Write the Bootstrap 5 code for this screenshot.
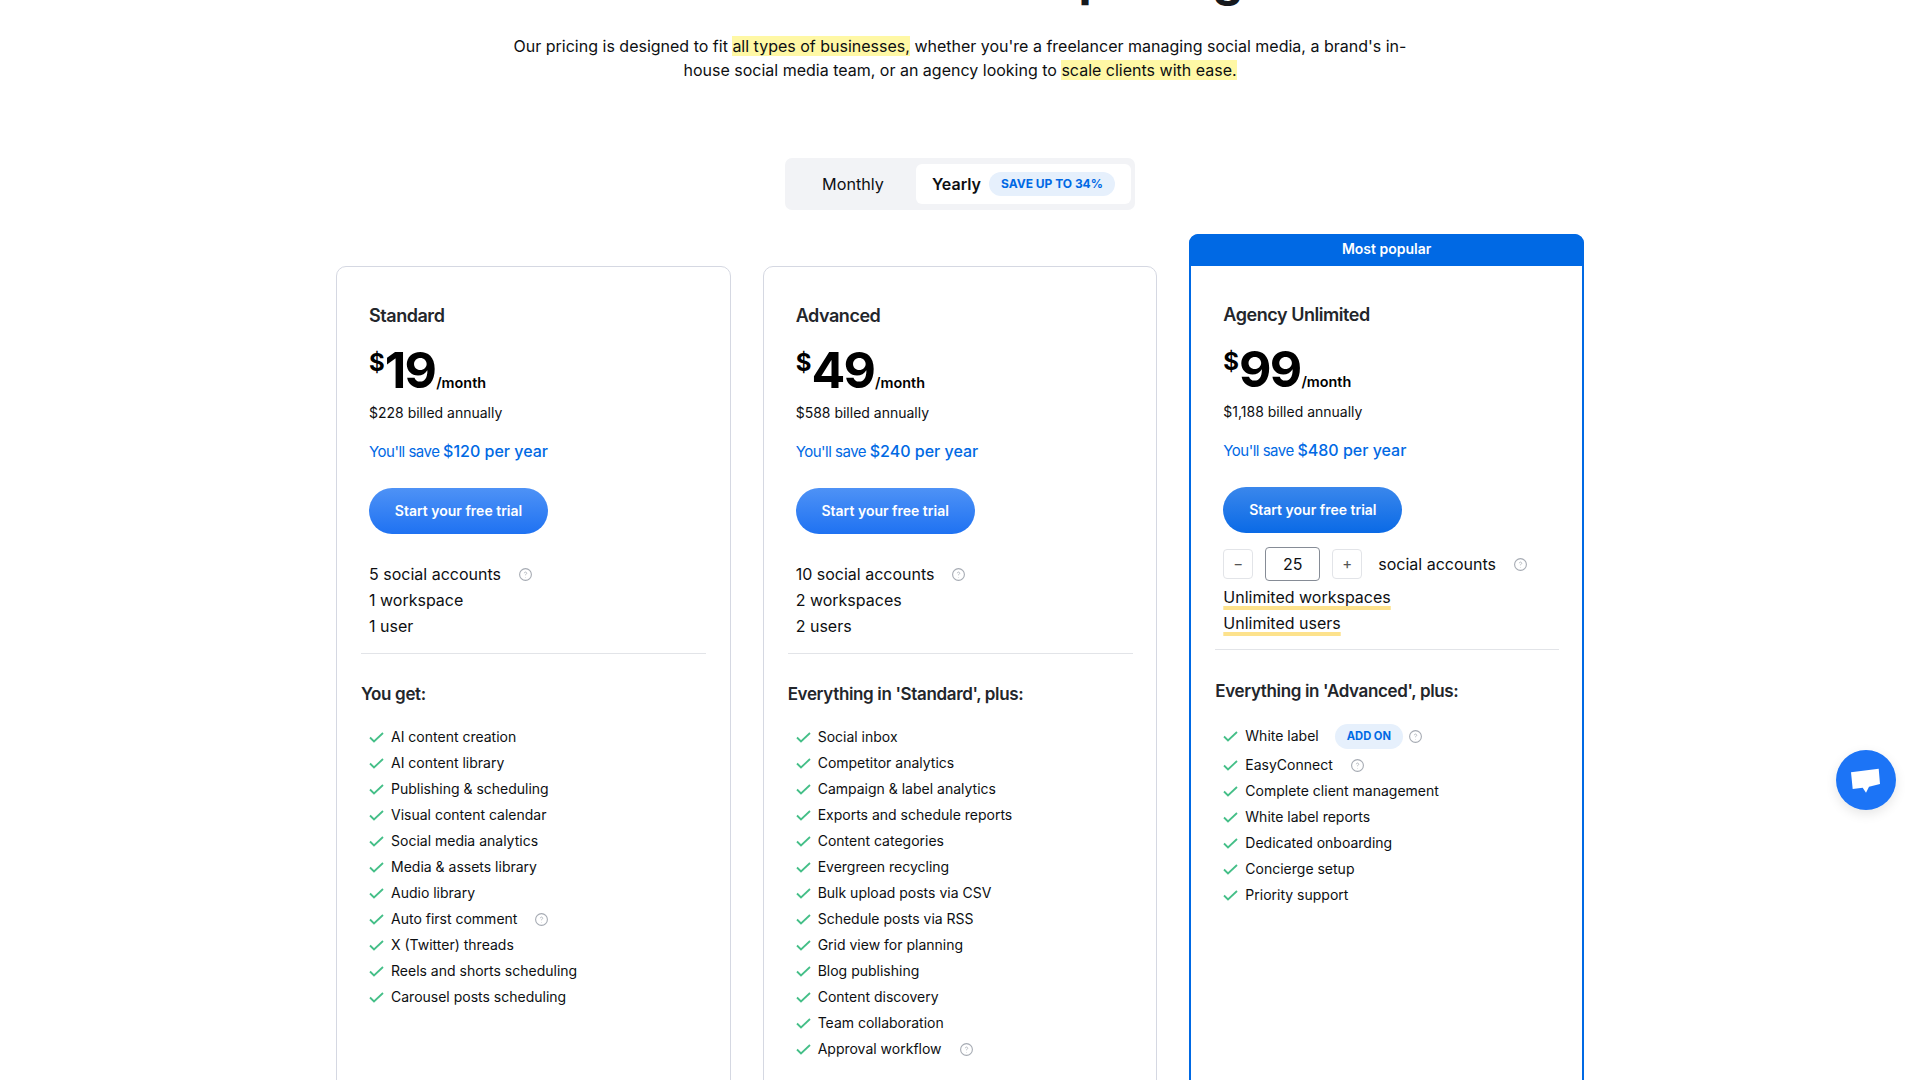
<!DOCTYPE html>
<html lang="en"><head><meta charset="utf-8">
<link href="https://cdn.jsdelivr.net/npm/bootstrap@5.3.0/dist/css/bootstrap.min.css" rel="stylesheet">
<style>
html,body{height:1080px;overflow:hidden}
body{font-family:Inter,"Liberation Sans",sans-serif;color:#0d0f12;background:#fff}
.page-head{font-size:48px;line-height:60px;font-weight:700;margin:-51px 0 0;height:60px;color:#16191d}
.intro{width:900px;font-size:16px;line-height:24px;margin:25px auto 0;color:#0d0f12}
.hl{background:#fff8a5}
.toggle-box{width:350px;height:52px;background:#f2f3f6;border-radius:7px;margin:76px auto 0;padding:6px 4px 6px 0}
.tab-m{width:131px;padding-left:5px;font-size:16.2px}
.tab-y{width:215px;background:#fff;border-radius:6px;font-size:16px;font-weight:600;padding-left:16px}
.save-pill{background:#e6f0fc;color:#0069e4;font-size:12px;font-weight:700;border-radius:12px;padding:0 12px;height:24px;margin-left:8px;line-height:24px;white-space:nowrap}
.plans{width:1248px;margin:24px auto 0;gap:32px;align-items:flex-start}
.plan{flex:0 0 calc((100% - 64px) / 3);min-width:0;margin-top:32px;height:830px;border:1px solid #d5d8e2;border-radius:10px;padding:37px 25px 0}
.plan-pop{margin-top:0;border:2px solid #0069e4;padding:0;height:862px}
.pop-bar{background:#0069e4;color:#fff;font-size:14px;font-weight:600;text-align:center;line-height:27px;margin:-2px -2px 0;padding-top:1px;height:32px;border-radius:9px 9px 0 0}
.pop-body{padding:37px 25px 0}
.plan-in{padding-left:7px}
.plan-name{font-size:18px;line-height:24px;font-weight:600;color:#23262b;margin:0;letter-spacing:-.45px}
.price{font-weight:700;margin-top:14px;height:56px;line-height:56px;color:#000;white-space:nowrap}
.price sup{font-size:24px;top:-17px;line-height:0;vertical-align:baseline;position:relative;font-weight:700}
.price b{font-size:50px;letter-spacing:-1.8px;font-weight:700}
.price span{font-size:14.4px;font-weight:600;margin-left:1px}
.billed{font-size:14px;line-height:22px;margin-top:4px}
.saving{font-size:15px;line-height:24px;color:#0069e4;margin-top:15px;letter-spacing:-.5px}
.saving em{font-style:normal;font-weight:500;font-size:16px;letter-spacing:0}
.cta{display:block;width:179px;height:46px;margin-top:24px;border-radius:23px;border:0;background:linear-gradient(#4e92f6,#1f72f2);color:#fff;font-size:14px;font-weight:600;padding:0 0 1px}
.plan-pop .cta{background:linear-gradient(#3a87ec,#0a6ae6)}
.limits{font-size:16px;line-height:26px;margin-top:27px}
.rule{border:0;border-top:1px solid #e2e4e8;opacity:1;margin:14px 0 0 -8px;width:345px}
.plan-pop .rule{margin-top:13px;width:344px}
.get-title{font-size:17px;line-height:24px;font-weight:600;color:#23262b;margin:28px 0 0 -8px;letter-spacing:-.35px}
.plan-pop .get-title{margin-top:29px}
.feats{list-style:none;padding:0;margin:18px 0 0}
.feats li{display:flex;align-items:center;font-size:14px;line-height:26px;height:26px;color:#0d0f12}
.feats li.tall{height:30px;margin-bottom:1px}
.check{width:15px;height:11px;margin-right:7px;flex:none}
.hint{width:13px;height:13px;flex:none;margin-left:18px}
.addon{background:#e6f0fc;color:#0069e4;font-size:11.2px;font-weight:700;border-radius:13px;padding:0 12px;height:25px;line-height:25px;margin-left:16px}
.addon+.hint{margin-left:6px}
.stepper{margin-top:14px;height:34px;font-size:16px}
.step{width:30px;height:30px;border:1px solid #e2e4e8;border-radius:4px;color:#555;font-size:15px;line-height:27px;text-align:center;flex:none}
.qty{width:55px;height:34px;border:1px solid #868c96;border-radius:4px;line-height:32px;text-align:center;margin:0 12px;flex:none}
.ul-y{text-decoration:underline;text-decoration-color:#fde28c;text-decoration-thickness:4px;text-underline-offset:3px;text-decoration-skip-ink:auto}
.unl{font-size:16px;line-height:26px;margin-top:3px}
.chat{position:fixed;left:1836px;top:750px;width:60px;height:60px;border-radius:50%;background:#1c74f6;box-shadow:0 4px 12px rgba(0,0,0,.1)}
.chat svg{display:block;margin:15px 0 0 15px}
</style></head>
<body>
<h1 class="page-head text-center">Scale with smart pricing</h1>
<p class="intro text-center">Our pricing is designed to fit <span class="hl">all types of businesses,</span> whether you're a freelancer managing social media, a brand's in-house social media team, or an agency looking to <span class="hl">scale clients with ease.</span></p>
<div class="toggle-box d-flex align-items-center">
<div class="tab-m text-center">Monthly</div>
<div class="tab-y d-flex align-items-center h-100">Yearly<span class="save-pill">SAVE UP TO 34%</span></div>
</div>
<svg width="0" height="0" class="d-block"><defs>
<symbol id="ck" viewBox="0 0 15 11"><path d="M1 5.5 5 9.5 14 1" fill="none" stroke="#45bf88" stroke-width="1.8"/></symbol>
<symbol id="qm" viewBox="0 0 13 13"><circle cx="6.5" cy="6.5" r="5.9" fill="none" stroke="#a6abb3" stroke-width="1.1"/><path d="M5.3 5.2a1.2 1.2 0 1 1 1.8 1.1c-.4.2-.6.4-.6.9M6.5 9v.4" fill="none" stroke="#a6abb3" stroke-width=".8"/></symbol>
</defs></svg>
<div class="plans d-flex">
<section class="plan"><div class="plan-in">
<h3 class="plan-name">Standard</h3>
<div class="price"><sup>$</sup><b>19</b><span>/month</span></div>
<div class="billed">$228 billed annually</div>
<div class="saving">You'll save <em>$120 per year</em></div>
<button class="cta">Start your free trial</button>
<div class="limits"><div class="d-flex align-items-center">5 social accounts<svg class="hint"><use href="#qm"/></svg></div><div>1 workspace</div><div>1 user</div></div>
<hr class="rule">
<h4 class="get-title">You get:</h4>
<ul class="feats">
<li><svg class="check"><use href="#ck"/></svg>AI content creation</li>
<li><svg class="check"><use href="#ck"/></svg>AI content library</li>
<li><svg class="check"><use href="#ck"/></svg>Publishing &amp; scheduling</li>
<li><svg class="check"><use href="#ck"/></svg>Visual content calendar</li>
<li><svg class="check"><use href="#ck"/></svg>Social media analytics</li>
<li><svg class="check"><use href="#ck"/></svg>Media &amp; assets library</li>
<li><svg class="check"><use href="#ck"/></svg>Audio library</li>
<li><svg class="check"><use href="#ck"/></svg>Auto first comment<svg class="hint"><use href="#qm"/></svg></li>
<li><svg class="check"><use href="#ck"/></svg>X (Twitter) threads</li>
<li><svg class="check"><use href="#ck"/></svg>Reels and shorts scheduling</li>
<li><svg class="check"><use href="#ck"/></svg>Carousel posts scheduling</li>
</ul></div></section>
<section class="plan"><div class="plan-in">
<h3 class="plan-name">Advanced</h3>
<div class="price"><sup>$</sup><b>49</b><span>/month</span></div>
<div class="billed">$588 billed annually</div>
<div class="saving">You'll save <em>$240 per year</em></div>
<button class="cta">Start your free trial</button>
<div class="limits"><div class="d-flex align-items-center">10 social accounts<svg class="hint"><use href="#qm"/></svg></div><div>2 workspaces</div><div>2 users</div></div>
<hr class="rule">
<h4 class="get-title">Everything in 'Standard', plus:</h4>
<ul class="feats">
<li><svg class="check"><use href="#ck"/></svg>Social inbox</li>
<li><svg class="check"><use href="#ck"/></svg>Competitor analytics</li>
<li><svg class="check"><use href="#ck"/></svg>Campaign &amp; label analytics</li>
<li><svg class="check"><use href="#ck"/></svg>Exports and schedule reports</li>
<li><svg class="check"><use href="#ck"/></svg>Content categories</li>
<li><svg class="check"><use href="#ck"/></svg>Evergreen recycling</li>
<li><svg class="check"><use href="#ck"/></svg>Bulk upload posts via CSV</li>
<li><svg class="check"><use href="#ck"/></svg>Schedule posts via RSS</li>
<li><svg class="check"><use href="#ck"/></svg>Grid view for planning</li>
<li><svg class="check"><use href="#ck"/></svg>Blog publishing</li>
<li><svg class="check"><use href="#ck"/></svg>Content discovery</li>
<li><svg class="check"><use href="#ck"/></svg>Team collaboration</li>
<li><svg class="check"><use href="#ck"/></svg>Approval workflow<svg class="hint"><use href="#qm"/></svg></li>
</ul></div></section>
<section class="plan plan-pop">
<div class="pop-bar">Most popular</div>
<div class="pop-body"><div class="plan-in">
<h3 class="plan-name">Agency Unlimited</h3>
<div class="price"><sup>$</sup><b>99</b><span>/month</span></div>
<div class="billed">$1,188 billed annually</div>
<div class="saving">You'll save <em>$480 per year</em></div>
<button class="cta">Start your free trial</button>
<div class="stepper d-flex align-items-center"><div class="step">−</div><div class="qty">25</div><div class="step">+</div><span class="ms-3">social accounts</span><svg class="hint"><use href="#qm"/></svg></div>
<div class="unl"><div><span class="ul-y">Unlimited workspaces</span></div><div><span class="ul-y">Unlimited users</span></div></div>
<hr class="rule">
<h4 class="get-title">Everything in 'Advanced', plus:</h4>
<ul class="feats">
<li class="tall"><svg class="check"><use href="#ck"/></svg>White label<span class="addon">ADD ON</span><svg class="hint"><use href="#qm"/></svg></li>
<li><svg class="check"><use href="#ck"/></svg>EasyConnect<svg class="hint"><use href="#qm"/></svg></li>
<li><svg class="check"><use href="#ck"/></svg>Complete client management</li>
<li><svg class="check"><use href="#ck"/></svg>White label reports</li>
<li><svg class="check"><use href="#ck"/></svg>Dedicated onboarding</li>
<li><svg class="check"><use href="#ck"/></svg>Concierge setup</li>
<li><svg class="check"><use href="#ck"/></svg>Priority support</li>
</ul></div></div></section>
</div>
<div class="chat"><svg width="30" height="30" viewBox="0 0 30 30"><path d="M0 7.3 27.7 3.7 29 19 18 21.7 15 27.7 11.7 22.7 1.7 24Z" fill="#fff"/></svg></div>
<script src="https://cdn.jsdelivr.net/npm/bootstrap@5.3.0/dist/js/bootstrap.bundle.min.js"></script>
</body></html>
